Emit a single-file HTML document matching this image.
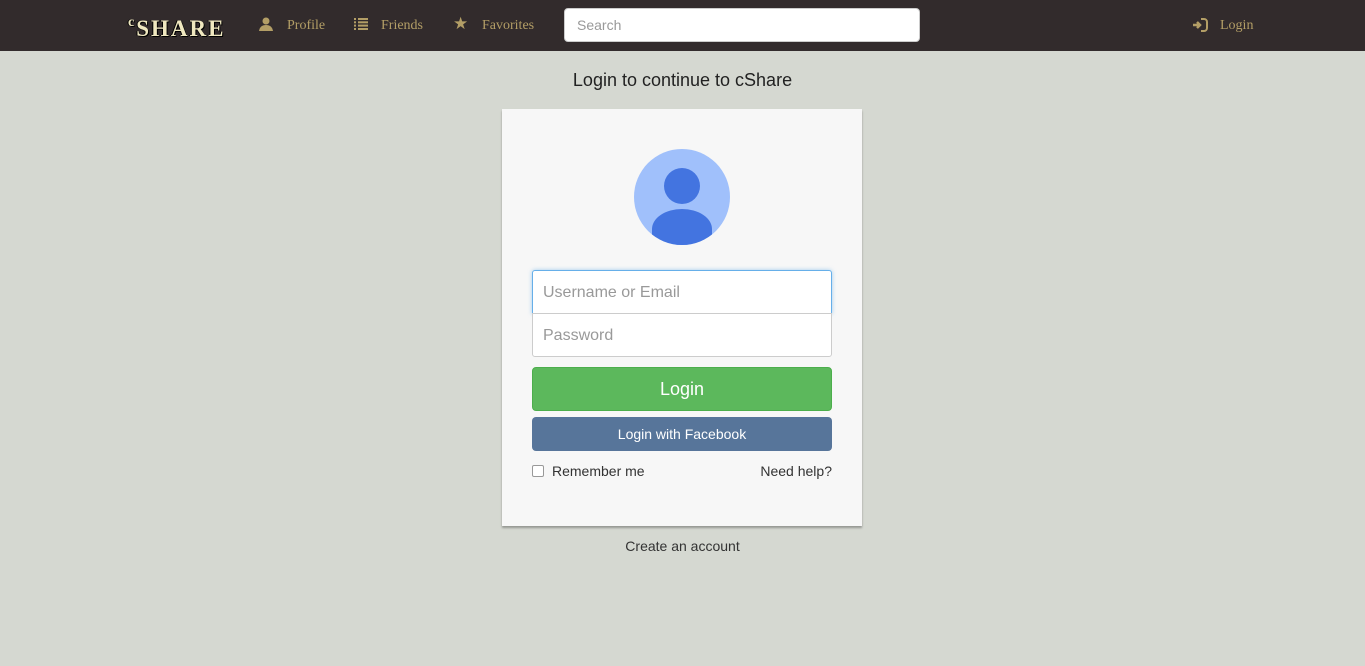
<!DOCTYPE html>
<html><head><style>
*{box-sizing:border-box}
body{margin:0;background:#d5d8d1;font-family:"Liberation Sans",sans-serif;width:1365px;height:666px;overflow:hidden;position:relative}
.nav{position:absolute;left:0;top:0;width:1365px;height:51px;background:#322b2c}
.nav .t{position:absolute;top:18px;font-family:"Liberation Serif",serif;font-size:14px;color:#b39e66}
.logo{position:absolute;left:128px;top:15px;font-family:"Liberation Serif",serif;font-weight:bold;color:#f0e8c0;font-size:23px;letter-spacing:2px;text-shadow:1px 1px 0 #000,-1px 0 0 #000}
.search{position:absolute;left:564px;top:8px;width:356px;height:34px;background:#fff;border:1px solid #ccc;border-radius:4px;padding:8px 12px;font-size:14px;color:#999}
h1{position:absolute;top:70px;left:0;width:1365px;text-align:center;font-size:18px;font-weight:normal;color:#222;margin:0}
.card{position:absolute;left:502px;top:109px;width:360px;height:417px;background:#f7f7f7;box-shadow:0 2px 2px rgba(0,0,0,.3)}
.in{position:absolute;left:30px;width:300px;height:44px;background:#fff;border:1px solid #ccc;font-size:16px;color:#999;padding:13px 10px}
.btn{position:absolute;left:30px;width:300px;border-radius:4px;color:#fff;text-align:center}
</style></head><body>
<div class="nav">
<div class="logo"><span style="font-size:14px;vertical-align:10px">c</span>SHARE</div>
<svg style="position:absolute;left:259px;top:17px" width="14" height="14"><circle cx="7" cy="4" r="3.5" fill="#b39e66"/><path d="M0 14 Q1 8 7 8 Q13 8 14 14Z" fill="#b39e66"/></svg>
<div class="t" style="left:287px">Profile</div>
<svg style="position:absolute;left:354px;top:18px" width="14" height="12" fill="#b39e66"><rect x="0" y="0" width="2" height="2"/><rect x="4" y="0" width="10" height="2"/><rect x="0" y="3.3" width="2" height="2"/><rect x="4" y="3.3" width="10" height="2"/><rect x="0" y="6.6" width="2" height="2"/><rect x="4" y="6.6" width="10" height="2"/><rect x="0" y="10" width="2" height="2"/><rect x="4" y="10" width="10" height="2"/></svg>
<div class="t" style="left:381px">Friends</div>
<div style="position:absolute;left:453px;top:14px;color:#b39e66;font-size:17px">★</div>
<div class="t" style="left:482px">Favorites</div>
<div class="search">Search</div>
<svg style="position:absolute;left:1192px;top:18px" width="16" height="14" fill="none" stroke="#b39e66" stroke-width="2"><path d="M9 1h3a3 3 0 0 1 3 3v6a3 3 0 0 1-3 3H9"/><path d="M1 7h6M5 4l3 3-3 3" stroke-width="2.5"/></svg>
<div class="t" style="left:1220px">Login</div>
</div>
<h1>Login to continue to cShare</h1>
<div class="card">
<svg style="position:absolute;left:132px;top:40px" width="96" height="96"><defs><clipPath id="c"><circle cx="48" cy="48" r="48"/></clipPath></defs><circle cx="48" cy="48" r="48" fill="#a0c0fb"/><g clip-path="url(#c)"><circle cx="48" cy="37" r="18" fill="#4374e0"/><path d="M18 96V80a30 20 0 0 1 60 0v16z" fill="#4374e0"/></g></svg>
<div class="in" style="top:161px;border-color:#66afe9;border-radius:3px 3px 0 0;box-shadow:0 0 4px rgba(102,175,233,.6)">Username or Email</div>
<div class="in" style="top:204px;border-radius:0 0 3px 3px">Password</div>
<div class="btn" style="top:258px;height:44px;background:#5cb85c;border:1px solid #4cae4c;font-size:18px;padding-top:11px">Login</div>
<div class="btn" style="top:308px;height:34px;background:#57759a;font-size:14px;padding-top:9px">Login with Facebook</div>
<div style="position:absolute;left:30px;top:356px;width:12px;height:12px;border:1px solid #999;border-radius:2px;background:#fff"></div>
<div style="position:absolute;left:50px;top:354px;font-size:14px;color:#333">Remember me</div>
<div style="position:absolute;right:30px;top:354px;font-size:14px;color:#333">Need help?</div>
</div>
<div style="position:absolute;top:538px;left:0;width:1365px;text-align:center;font-size:14px;color:#333">Create an account</div>
</body></html>
